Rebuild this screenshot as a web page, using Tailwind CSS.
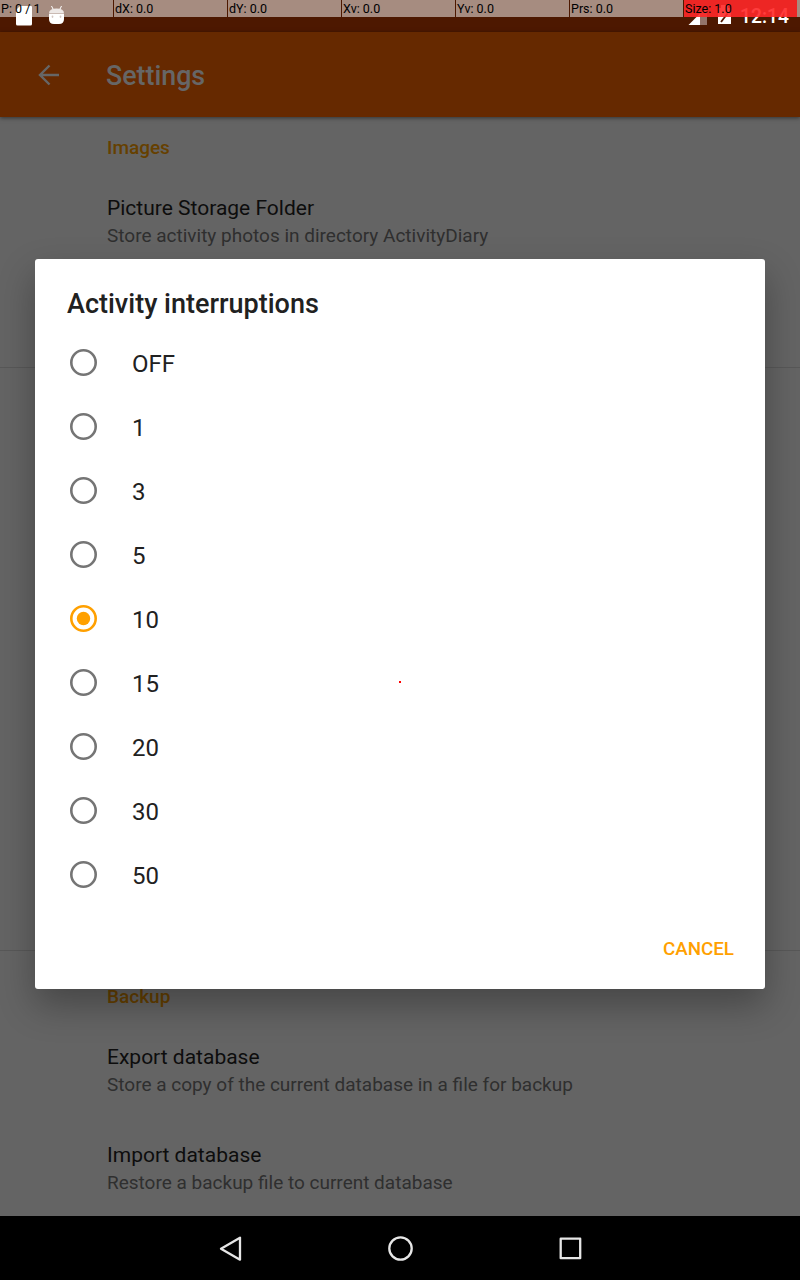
<!DOCTYPE html>
<html lang="en">
<head>
<meta charset="utf-8">
<title>Settings</title>
<script src="https://cdn.jsdelivr.net/npm/@tailwindcss/browser@4"></script>
</head>
<body class="h-[1280px] w-[800px] overflow-hidden bg-black font-['Roboto',sans-serif]">
<div class="relative flex h-[1280px] w-[800px] flex-col overflow-hidden">
  <!-- status bar -->
  <div class="relative h-8 shrink-0 bg-[#4d1800]">
    <svg class="absolute inset-0" width="800" height="32" viewBox="0 0 800 32">
      <path d="M20 6h11q1 0 1 1v17q0 1.500-1.500 1.500h-13q-1.500 0-1.500-1.500V10z" fill="#fff"/>
      <path d="M49 14h15v5q0 5-5 5h-5q-5 0-5-5z" fill="#fff"/>
      <path d="M53 9l-1.500-3M60 9l1.500-3" stroke="#fff" fill="none"/>
      <path d="M49 13.500q0-5 7.500-5t7.500 5z" fill="#fff" opacity=".8"/>
      <circle cx="52.500" cy="16.500" r="0.900" fill="#a68c80"/><circle cx="60.500" cy="16.500" r="0.900" fill="#a68c80"/>
      <path d="M700 13L707 7v18h-7z" fill="#94746a"/>
      <path d="M688.500 25L700 13.500V25z" fill="#fff"/>
      <path d="M718 8h3V5h7v3h3v16h-13z" fill="#fff"/>
      <path d="M727.500 13.500L721 22" stroke="#4d1800" stroke-width="1.800"/>
    </svg>
    <span class="absolute left-[740px] top-[5px] text-[19.300px] leading-6 font-medium text-white">12:14</span>
    <!-- pointer location readout -->
    <div class="absolute inset-x-0 top-0 flex h-[17px] gap-px text-[12.500px] leading-[17px] text-black">
      <div class="w-[113px] bg-white/50 pl-px">P: 0 / 1</div>
      <div class="w-[113px] bg-white/50 pl-px">dX: 0.0</div>
      <div class="w-[113px] bg-white/50 pl-px">dY: 0.0</div>
      <div class="w-[113px] bg-white/50 pl-px">Xv: 0.0</div>
      <div class="w-[113px] bg-white/50 pl-px">Yv: 0.0</div>
      <div class="w-[113px] bg-white/50 pl-px">Prs: 0.0</div>
      <div class="-mr-px w-[113px] bg-[#ff2828]/90 pl-px">Size: 1.0</div>
      <div class="flex-1 bg-white/50"></div>
    </div>
  </div>
  <!-- app bar -->
  <header class="z-10 flex h-[85px] shrink-0 items-center bg-[#662900] pl-[38px] text-[#666] shadow-[0_1px_4px_rgba(0,0,0,0.5)]">
    <svg width="22" height="22" viewBox="0 0 22 22" fill="none" stroke="#666" stroke-width="2.400"><path d="M21 11H2M11.500 1.500L2 11l9.500 9.500"/></svg>
    <h1 class="ml-[46px] pt-1 text-[26.800px] font-medium">Settings</h1>
  </header>
  <main class="flex h-[1099px] shrink-0 flex-col bg-[#646464] text-[19px] leading-6 text-[#2f2f2f]">
    <section class="h-[251px] border-b border-[#585858] pl-[107px] pt-[19px]">
      <h2 class="font-medium text-[#664000]">Images</h2>
      <h3 class="mt-[34px] text-[21px] leading-7 text-[#0d0d0d]">Picture Storage Folder</h3>
      <p class="mt-0.5">Store activity photos in directory ActivityDiary</p>
    </section>
    <section class="h-[583px] border-b border-[#585858]"></section>
    <section class="pl-[107px] pt-[34px]">
      <h2 class="font-medium text-[#664000]">Backup</h2>
      <h3 class="mt-[34px] text-[21px] leading-7 text-[#0d0d0d]">Export database</h3>
      <p class="mt-0.5">Store a copy of the current database in a file for backup</p>
      <h3 class="mt-11 text-[21px] leading-7 text-[#0d0d0d]">Import database</h3>
      <p class="mt-0.5">Restore a backup file to current database</p>
    </section>
  </main>
  <!-- navigation bar -->
  <nav class="z-30 flex h-16 shrink-0 items-center justify-center bg-black">
    <svg width="400" height="64" viewBox="0 0 400 64" fill="none" stroke="#e6e6e6" stroke-width="2.300" stroke-linejoin="round">
      <path d="M21 32.700L40 21.700v22z"/><circle cx="200.500" cy="32.500" r="11.200"/><rect x="360.700" y="22.700" width="19.500" height="19.500"/>
    </svg>
  </nav>
  <!-- dialog -->
  <div class="absolute left-[35px] top-[259px] z-20 flex h-[730px] w-[730px] flex-col rounded-[3px] bg-white pl-8 pt-[25px] text-[#212121] shadow-[0_16px_36px_rgba(0,0,0,0.3)]">
    <h2 class="h-[47px] text-[27px] leading-10 font-medium">Activity interruptions</h2>
    <ul class="flex flex-col text-[24px]">
      <li class="flex h-16 items-center gap-[33px]"><svg width="32" height="32"><circle cx="16.500" cy="15.500" r="12.200" fill="none" stroke="#757575" stroke-width="2.600"/></svg><span class="pt-px">OFF</span></li>
      <li class="flex h-16 items-center gap-[33px]"><svg width="32" height="32"><circle cx="16.500" cy="15.500" r="12.200" fill="none" stroke="#757575" stroke-width="2.600"/></svg><span class="pt-px">1</span></li>
      <li class="flex h-16 items-center gap-[33px]"><svg width="32" height="32"><circle cx="16.500" cy="15.500" r="12.200" fill="none" stroke="#757575" stroke-width="2.600"/></svg><span class="pt-px">3</span></li>
      <li class="flex h-16 items-center gap-[33px]"><svg width="32" height="32"><circle cx="16.500" cy="15.500" r="12.200" fill="none" stroke="#757575" stroke-width="2.600"/></svg><span class="pt-px">5</span></li>
      <li class="flex h-16 items-center gap-[33px]"><svg width="32" height="32"><circle cx="16.500" cy="15.500" r="12.200" fill="none" stroke="#ffa000" stroke-width="2.600"/><circle cx="16.500" cy="15.500" r="6.700" fill="#ffa000"/></svg><span class="pt-px">10</span></li>
      <li class="flex h-16 items-center gap-[33px]"><svg width="32" height="32"><circle cx="16.500" cy="15.500" r="12.200" fill="none" stroke="#757575" stroke-width="2.600"/></svg><span class="pt-px">15</span></li>
      <li class="flex h-16 items-center gap-[33px]"><svg width="32" height="32"><circle cx="16.500" cy="15.500" r="12.200" fill="none" stroke="#757575" stroke-width="2.600"/></svg><span class="pt-px">20</span></li>
      <li class="flex h-16 items-center gap-[33px]"><svg width="32" height="32"><circle cx="16.500" cy="15.500" r="12.200" fill="none" stroke="#757575" stroke-width="2.600"/></svg><span class="pt-px">30</span></li>
      <li class="flex h-16 items-center gap-[33px]"><svg width="32" height="32"><circle cx="16.500" cy="15.500" r="12.200" fill="none" stroke="#757575" stroke-width="2.600"/></svg><span class="pt-px">50</span></li>
    </ul>
    <button class="mt-[30px] mr-[31px] self-end text-[18.800px] leading-6 font-medium text-[#ffa000]">CANCEL</button>
  </div>
  <div class="absolute left-[399px] top-[681px] z-30 size-[2px] bg-[#ff0000]"></div>
</div>
</body>
</html>
